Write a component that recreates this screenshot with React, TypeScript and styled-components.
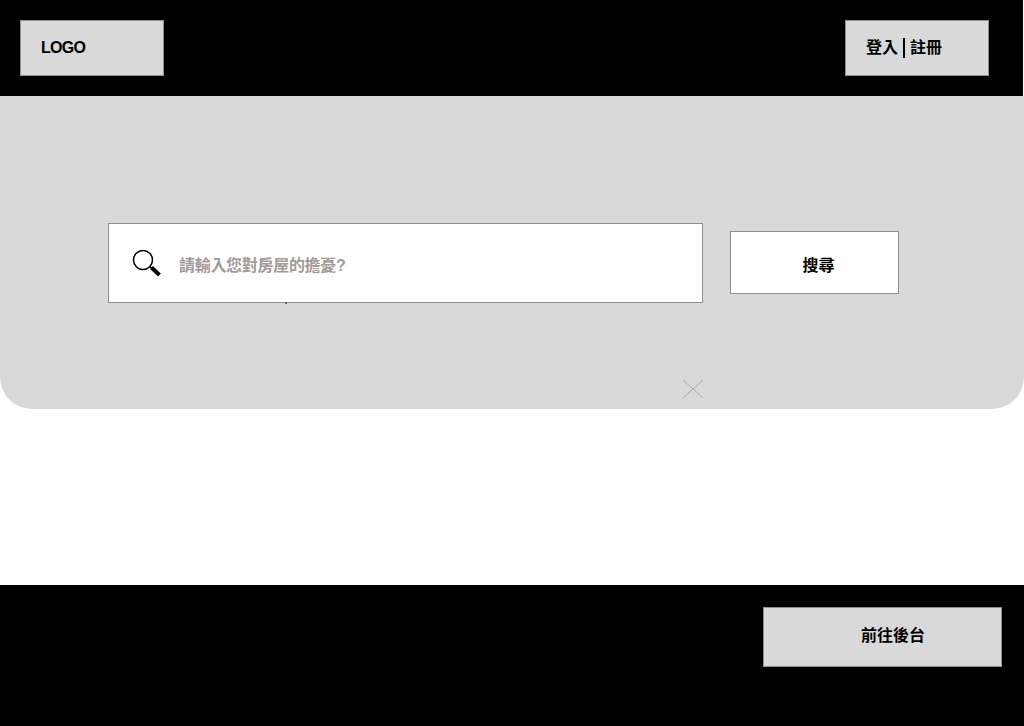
import styled, { createGlobalStyle } from 'styled-components';

const GlobalStyle = createGlobalStyle`
  html, body {
    margin: 0;
    padding: 0;
    background: #fff;
  }
  body {
    font-family: "Liberation Sans", "Noto Sans CJK TC", sans-serif;
  }
`;

const Page = styled.div`
  width: 1024px;
  height: 726px;
  display: flex;
  flex-direction: column;
  overflow: hidden;
`;

const Header = styled.header`
  width: 1023px;
  height: 96px;
  flex-shrink: 0;
  box-sizing: border-box;
  padding: 20px 34px 0 20px;
  background: #000;
  display: flex;
  justify-content: space-between;
  align-items: flex-start;
`;

const GreyBox = styled.div<{ $w: number; $h: number; $pl: number; $lift?: number; $tight?: boolean }>`
  width: ${(p) => p.$w}px;
  height: ${(p) => p.$h}px;
  box-sizing: border-box;
  padding-left: ${(p) => p.$pl}px;
  padding-bottom: ${(p) => p.$lift ?? 0}px;
  background: #d9d9d9;
  border: 1px solid #8f8f8f;
  display: flex;
  align-items: center;
  color: #000;
  font-size: 16px;
  font-weight: 700;
  letter-spacing: ${(p) => (p.$tight ? '-0.7px' : 'normal')};
`;

const Divider = styled.span`
  width: 2px;
  height: 20px;
  margin: 5px 5px 0 5px;
  background: #000;
`;

const Hero = styled.section`
  height: 313px;
  flex-shrink: 0;
  box-sizing: border-box;
  padding: 127px 125px 0 108px;
  background: #d9d9d9;
  border-radius: 0 0 32px 32px;
  display: flex;
  justify-content: space-between;
  align-items: flex-start;
  position: relative;
`;

const SearchBox = styled.div`
  width: 595px;
  height: 80px;
  box-sizing: border-box;
  padding-left: 23px;
  background: #fff;
  border: 1px solid #8f8f8f;
  display: flex;
  align-items: center;
  gap: 17px;
`;

const Placeholder = styled.span`
  color: #a39a9a;
  font-size: 16px;
  font-weight: 700;
  letter-spacing: -0.3px;
  margin-top: 1px;
`;

const SearchButton = styled.button`
  width: 169px;
  height: 63px;
  margin-top: 8px;
  box-sizing: border-box;
  padding: 2px 0 0 8px;
  background: #fff;
  border: 1px solid #8f8f8f;
  color: #000;
  font-family: inherit;
  font-size: 16px;
  font-weight: 700;
`;

const CloseMark = styled.svg`
  position: absolute;
  left: 681px;
  top: 283px;
  width: 24px;
  height: 20px;
`;

const Tick = styled.span`
  position: absolute;
  left: 285px;
  top: 206px;
  width: 2px;
  height: 2px;
  background: #666;
`;

const Spacer = styled.div`
  flex: 1;
`;

const Footer = styled.footer`
  height: 141px;
  flex-shrink: 0;
  box-sizing: border-box;
  padding: 22px 22px 0 0;
  background: #000;
  display: flex;
  justify-content: flex-end;
  align-items: flex-start;
`;

export default function App() {
  return (
    <>
      <GlobalStyle />
      <Page>
        <Header>
          <GreyBox $w={144} $h={56} $pl={20} $tight>LOGO</GreyBox>
          <GreyBox $w={144} $h={56} $pl={20} $lift={5}>
            登入<Divider />註冊
          </GreyBox>
        </Header>
        <Hero>
          <SearchBox>
            <svg width="30" height="28" viewBox="0 0 30 28" fill="none" stroke="#000">
              <circle cx="11" cy="11" r="9.5" strokeWidth="1.5" />
              <path d="M17.5 17.5l3 2.5" strokeWidth="1.5" />
              <path d="M19.5 18.5l8 7.5" strokeWidth="4" />
            </svg>
            <Placeholder>請輸入您對房屋的擔憂?</Placeholder>
          </SearchBox>
          <SearchButton>搜尋</SearchButton>
          <Tick />
          <CloseMark viewBox="0 0 24 20" fill="none" stroke="#a8a8a8" strokeWidth="1">
            <path d="M2 1l20 18M22 1L2 19" />
          </CloseMark>
        </Hero>
        <Spacer />
        <Footer>
          <GreyBox $w={239} $h={60} $pl={97} $lift={6}>前往後台</GreyBox>
        </Footer>
      </Page>
    </>
  );
}
